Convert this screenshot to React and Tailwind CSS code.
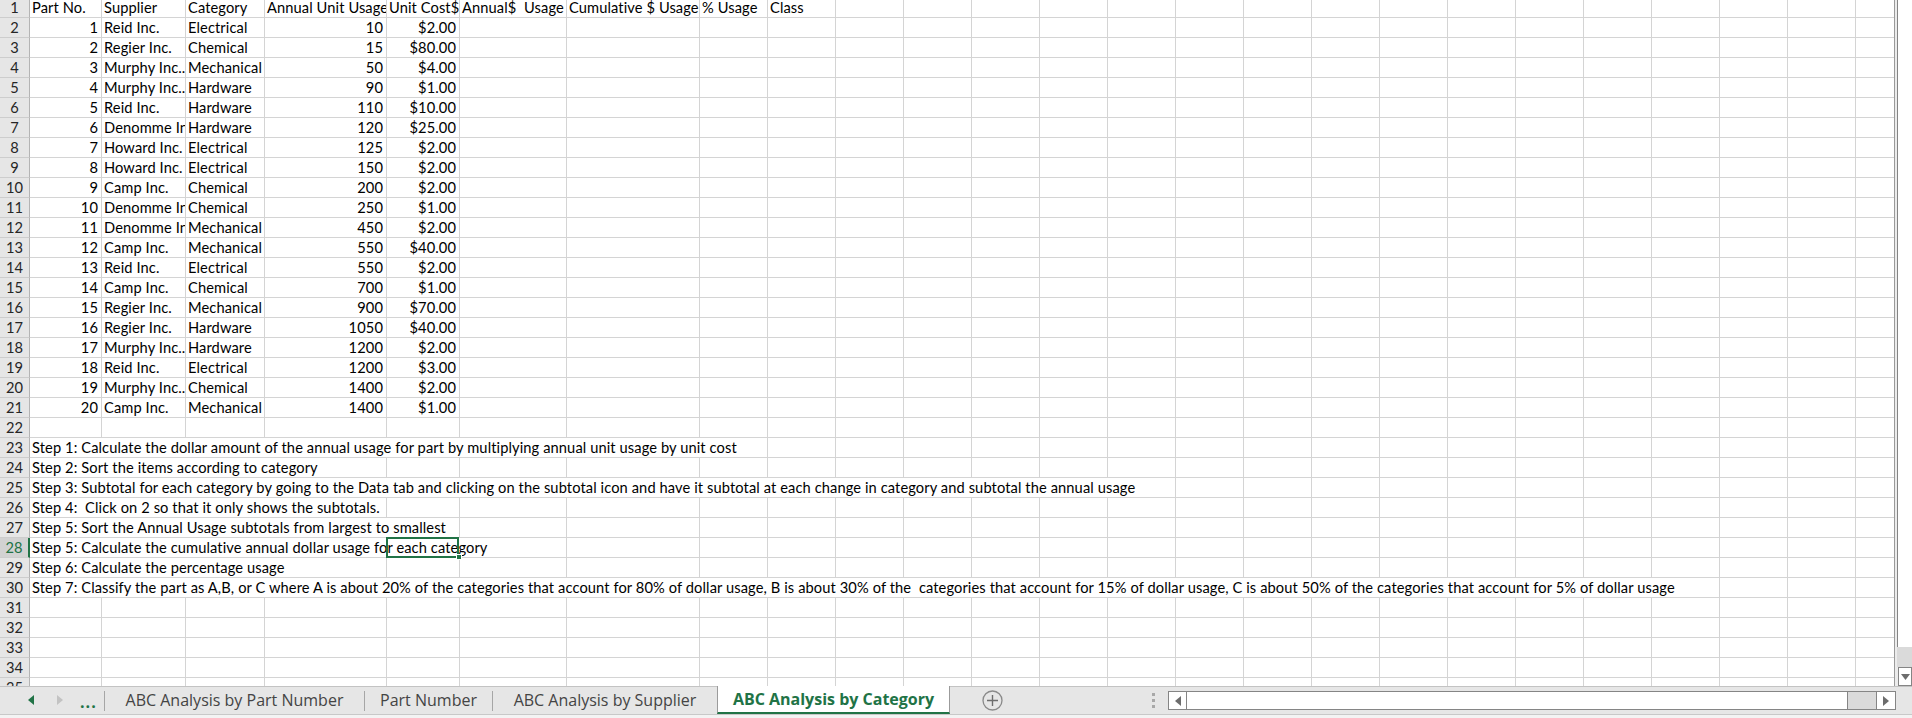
import React from 'react';

const COLS = 'grid-cols-[30px_72px_84px_79px_122px_73px_107px_133px_68px_repeat(17,68px)]';
const DATA_COLS = 25;

const header = ['Part No.', 'Supplier', 'Category', 'Annual Unit Usage', 'Unit Cost$', 'Annual$  Usage', 'Cumulative $ Usage', '% Usage', 'Class'];

const parts = [
  [1, 'Reid Inc.', 'Electrical', 10, '$2.00'],
  [2, 'Regier Inc.', 'Chemical', 15, '$80.00'],
  [3, 'Murphy Inc..', 'Mechanical', 50, '$4.00'],
  [4, 'Murphy Inc..', 'Hardware', 90, '$1.00'],
  [5, 'Reid Inc.', 'Hardware', 110, '$10.00'],
  [6, 'Denomme Inc.', 'Hardware', 120, '$25.00'],
  [7, 'Howard Inc.', 'Electrical', 125, '$2.00'],
  [8, 'Howard Inc.', 'Electrical', 150, '$2.00'],
  [9, 'Camp Inc.', 'Chemical', 200, '$2.00'],
  [10, 'Denomme Inc.', 'Chemical', 250, '$1.00'],
  [11, 'Denomme Inc.', 'Mechanical', 450, '$2.00'],
  [12, 'Camp Inc.', 'Mechanical', 550, '$40.00'],
  [13, 'Reid Inc.', 'Electrical', 550, '$2.00'],
  [14, 'Camp Inc.', 'Chemical', 700, '$1.00'],
  [15, 'Regier Inc.', 'Mechanical', 900, '$70.00'],
  [16, 'Regier Inc.', 'Hardware', 1050, '$40.00'],
  [17, 'Murphy Inc..', 'Hardware', 1200, '$2.00'],
  [18, 'Reid Inc.', 'Electrical', 1200, '$3.00'],
  [19, 'Murphy Inc..', 'Chemical', 1400, '$2.00'],
  [20, 'Camp Inc.', 'Mechanical', 1400, '$1.00'],
];

const steps = {
  23: { n: 8, span: 'col-span-8', text: 'Step 1: Calculate the dollar amount of the annual usage for part by multiplying annual unit usage by unit cost' },
  24: { n: 4, span: 'col-span-4', text: 'Step 2: Sort the items according to category' },
  25: { n: 14, span: 'col-span-14', text: 'Step 3: Subtotal for each category by going to the Data tab and clicking on the subtotal icon and have it subtotal at each change in category and subtotal the annual usage' },
  26: { n: 4, span: 'col-span-4', text: 'Step 4:  Click on 2 so that it only shows the subtotals.' },
  27: { n: 5, span: 'col-span-5', text: 'Step 5: Sort the Annual Usage subtotals from largest to smallest' },
  28: { n: 6, span: 'col-span-6', text: 'Step 5: Calculate the cumulative annual dollar usage for each category' },
  29: { n: 4, span: 'col-span-4', text: 'Step 6: Calculate the percentage usage' },
  30: { n: 22, span: 'col-span-22', text: 'Step 7: Classify the part as A,B, or C where A is about 20% of the categories that account for 80% of dollar usage, B is about 30% of the  categories that account for 15% of dollar usage, C is about 50% of the categories that account for 5% of dollar usage' },
};

const cellBase = 'h-[20px] border-r border-b border-[#d4d4d4] overflow-hidden whitespace-pre leading-[19px] text-black tracking-[0.1px]';

function Cell({ children, right, span }) {
  return (
    <div className={`${cellBase} ${right ? 'text-right pr-[3px]' : 'text-left pl-[2px]'} ${span || ''}`}>
      {children}
    </div>
  );
}

function RowHead({ n }) {
  const sel = n === 28;
  return (
    <div
      className={`h-[20px] border-b border-[#cdcdcd] text-center leading-[19px] ${
        sel ? 'bg-[#d2d2d2] text-[#217346] border-r-2 border-r-[#217346]' : 'bg-[#e6e6e6] text-[#262626] border-r border-r-[#b4b4b4]'
      }`}
    >
      {n}
    </div>
  );
}

function Row({ n }) {
  const cells = [];
  if (n === 1) {
    header.forEach((h, i) => cells.push(<Cell key={i}>{h}</Cell>));
    for (let i = header.length; i < DATA_COLS; i++) cells.push(<Cell key={i} />);
  } else if (n >= 2 && n <= 21) {
    const p = parts[n - 2];
    cells.push(<Cell key="a" right>{p[0]}</Cell>);
    cells.push(<Cell key="b">{p[1]}</Cell>);
    cells.push(<Cell key="c">{p[2]}</Cell>);
    cells.push(<Cell key="d" right>{p[3]}</Cell>);
    cells.push(<Cell key="e" right>{p[4]}</Cell>);
    for (let i = 5; i < DATA_COLS; i++) cells.push(<Cell key={i} />);
  } else if (steps[n]) {
    const s = steps[n];
    cells.push(<Cell key="s" span={s.span}>{s.text}</Cell>);
    for (let i = s.n; i < DATA_COLS; i++) cells.push(<Cell key={i} />);
  } else {
    for (let i = 0; i < DATA_COLS; i++) cells.push(<Cell key={i} />);
  }
  return (
    <>
      <RowHead n={n} />
      {cells}
    </>
  );
}

function TriLeft({ color, className }) {
  return (
    <svg width="6" height="10" viewBox="0 0 6 10" className={className}>
      <path d="M6 0 L0 5 L6 10 Z" fill={color} />
    </svg>
  );
}
function TriRight({ color, className }) {
  return (
    <svg width="6" height="10" viewBox="0 0 6 10" className={className}>
      <path d="M0 0 L6 5 L0 10 Z" fill={color} />
    </svg>
  );
}

function Sep() {
  return <div className="w-px h-[20px] bg-[#a6a6a6] mt-[4px]" />;
}

export default function App() {
  const rows = [];
  for (let n = 1; n <= 35; n++) rows.push(<Row key={n} n={n} />);
  return (
    <div className="w-[1912px] h-[718px] overflow-hidden bg-white flex flex-col font-['Lato',sans-serif] text-[14.67px]">
      {/* sheet area */}
      <div className="h-[686px] flex flex-row shrink-0">
        <div className="relative w-[1895px] h-[686px] overflow-hidden border-r border-[#9a9a9a]">
          <div className={`grid ${COLS} w-max -mt-[2px]`}>{rows}</div>
          {/* selection box */}
          <div className="absolute left-[386px] top-[537px] w-[73px] h-[21px] border-2 border-[#217346]" />
          <div className="absolute left-[456px] top-[554px] w-[6px] h-[6px] bg-[#217346] border border-white" />
        </div>
        {/* vertical scrollbar */}
        <div className="w-[17px] h-[686px] flex flex-col bg-[#ececec]">
          <div className="flex-1 ml-[2px] bg-white border-l border-[#858585]" />
          <div className="h-[20px] bg-[#dadada] ml-[2px]" />
          <div className="h-[19px] ml-[3px] bg-white border border-[#858585] flex items-center justify-center">
            <svg width="9" height="6" viewBox="0 0 9 6">
              <path d="M0 0 L9 0 L4.5 6 Z" fill="#6d6d6d" />
            </svg>
          </div>
        </div>
      </div>

      {/* tab bar */}
      <div className="h-[28px] shrink-0 bg-[#e6e6e6] border-t border-[#c3c3c3] flex flex-row font-['Open_Sans',sans-serif] text-[16px]">
        <div className="w-[104px] h-[26px] flex items-center">
          <TriLeft color="#217346" className="ml-[28px]" />
          <TriRight color="#c3c3c3" className="ml-[23px]" />
          <span className="ml-[17px] text-[#217346] font-bold tracking-[1px] leading-none mt-[4px]">...</span>
        </div>
        <Sep />
        <div className="w-[259px] h-[26px] flex items-center justify-center text-[#444] whitespace-nowrap">ABC Analysis by Part Number</div>
        <Sep />
        <div className="w-[127px] h-[26px] flex items-center justify-center text-[#444] whitespace-nowrap">Part Number</div>
        <Sep />
        <div className="w-[224px] h-[26px] flex items-center justify-center text-[#444] whitespace-nowrap">ABC Analysis by Supplier</div>
        <div className="w-[231px] h-[26px] -mt-px box-content bg-white border-l border-r border-[#9b9b9b] border-b-2 border-b-[#217346] flex items-center justify-center text-[#217346] font-bold whitespace-nowrap">
          ABC Analysis by Category
        </div>
        <div className="ml-[32px] w-[21px] h-[26px] flex items-center">
          <svg width="21" height="21" viewBox="0 0 21 21">
            <circle cx="10.5" cy="10.5" r="9.5" fill="none" stroke="#8a8a8a" strokeWidth="1.3" />
            <path d="M10.5 5 V16 M5 10.5 H16" stroke="#6d6d6d" strokeWidth="1.4" />
          </svg>
        </div>
        <div className="ml-[149px] w-[3px] h-[26px] flex flex-col justify-center gap-[3px]">
          <div className="w-[3px] h-[3px] bg-[#a8a8a8]" />
          <div className="w-[3px] h-[3px] bg-[#a8a8a8]" />
          <div className="w-[3px] h-[3px] bg-[#a8a8a8]" />
        </div>
        {/* horizontal scrollbar */}
        <div className="ml-[13px] mt-[4px] w-[728px] h-[19px] border border-[#858585] bg-[#dadada] flex flex-row">
          <div className="w-[18px] bg-white border-r border-[#858585] flex items-center justify-center">
            <TriLeft color="#6d6d6d" />
          </div>
          <div className="w-[661px] bg-white border-r border-[#858585]" />
          <div className="flex-1" />
          <div className="w-[19px] bg-white border-l border-[#858585] flex items-center justify-center">
            <TriRight color="#6d6d6d" />
          </div>
        </div>
      </div>
      <div className="flex-1 bg-[#f3f3f3] border-t border-[#c8c8c8]" />
    </div>
  );
}
